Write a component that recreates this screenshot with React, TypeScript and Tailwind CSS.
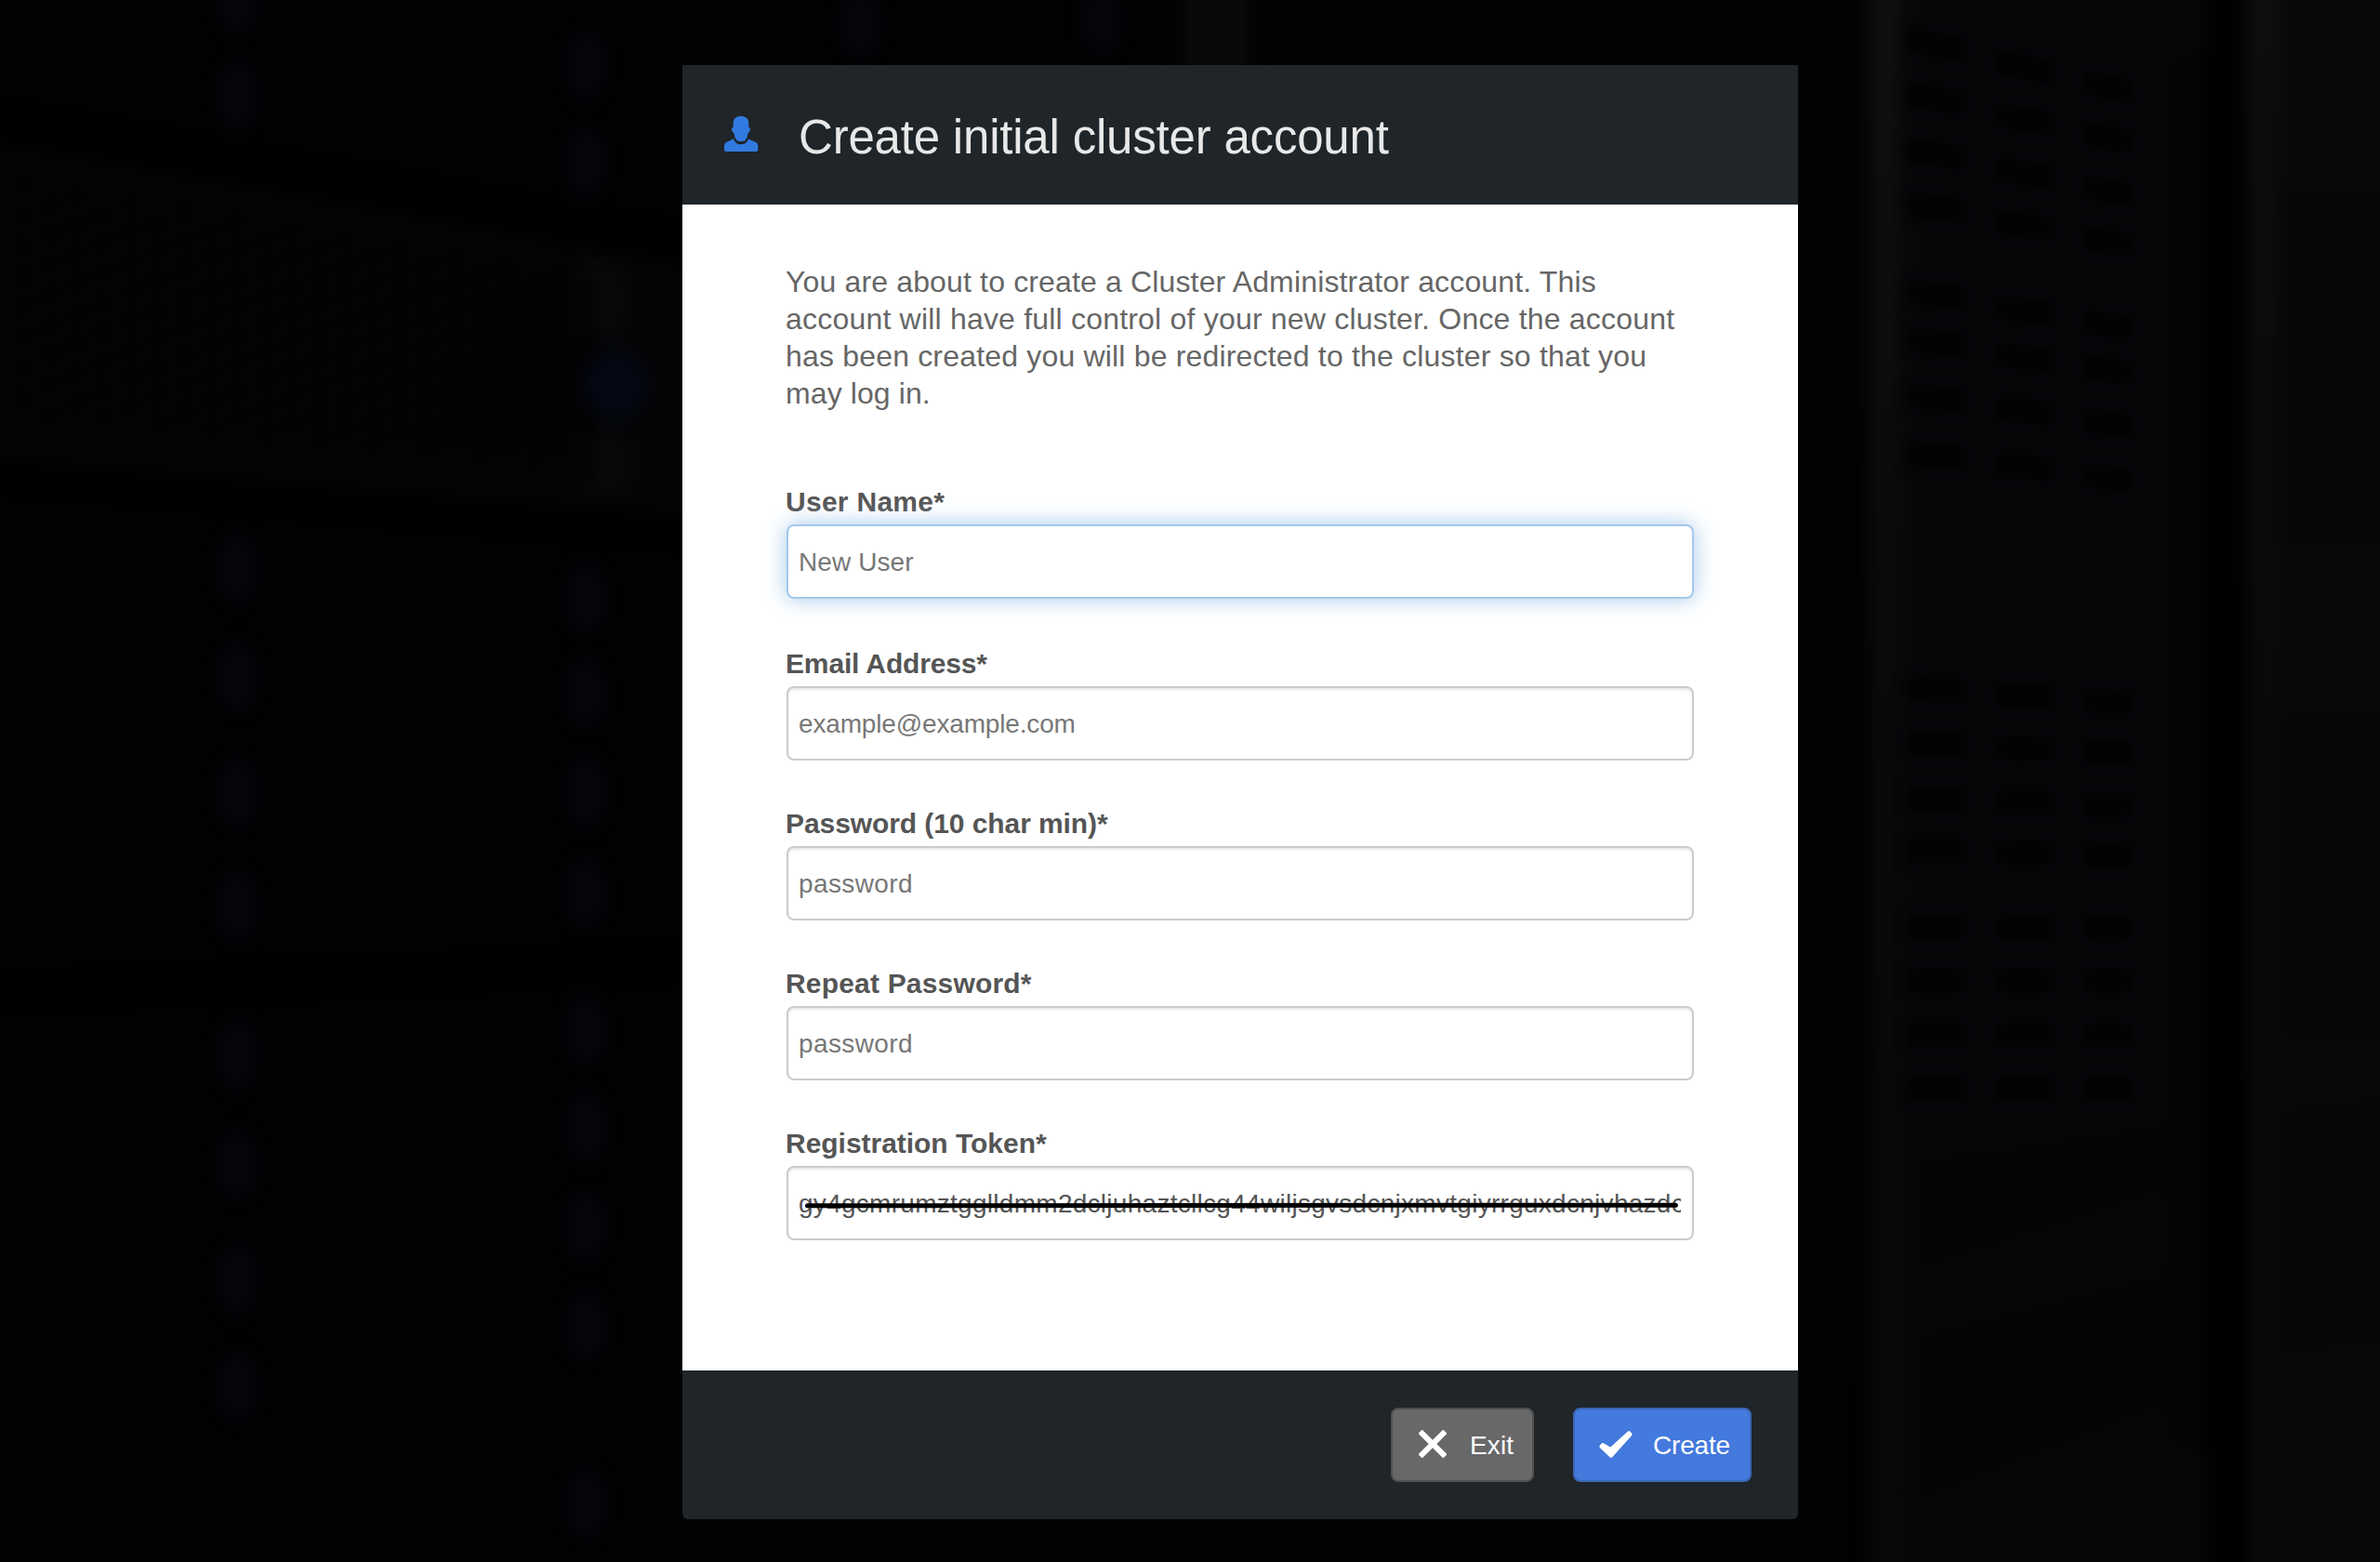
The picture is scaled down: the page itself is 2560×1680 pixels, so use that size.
import type { ReactNode } from 'react';

const leds: [number, number][] = [
  [255, 0], [255, 102], [255, 611], [255, 728], [255, 852], [255, 974],
  [255, 1135], [255, 1252], [255, 1376], [255, 1491],
  [630, 70], [630, 174], [630, 643], [630, 745], [630, 852],
  [630, 960], [630, 1108], [630, 1212], [630, 1319], [630, 1426], [630, 1617],
  [925, 26], [1185, 22],
];

const meshDots: [number, number][] = [];
for (let col = 0; col < 22; col++) {
  for (let row = 0; row < 8; row++) {
    const x = 24 + col * 29;
    const top = 195 + x * 0.165;
    const bottom = 458 + x * 0.09;
    meshDots.push([x, top + ((row + (col % 2) * 0.5) * (bottom - top)) / 8]);
  }
}

const slats: [number, number, number, number][] = [];
const slatColumns: [number, number, number][] = [
  [2050, 66, 0], [2146, 64, 24], [2240, 54, 46],
];
const slatRows = [
  30, 88, 148, 206, 300, 352, 412, 474, 728, 786, 846, 902, 984, 1042, 1100, 1158,
];
for (const [x, w, drop] of slatColumns) {
  for (const y of slatRows) {
    slats.push([x, y + drop * Math.max(0, 1 - y / 1000), w, Math.max(0, 3 - y / 300)]);
  }
}

function ServerRoom() {
  return (
    <svg className="absolute inset-0 h-full w-full" viewBox="0 0 2560 1680" aria-hidden="true">
      <defs>
        <filter id="soft" x="-10%" y="-10%" width="120%" height="120%" colorInterpolationFilters="sRGB">
          <feGaussianBlur stdDeviation="10" />
        </filter>
        <filter id="fine" x="-10%" y="-10%" width="120%" height="120%" colorInterpolationFilters="sRGB">
          <feGaussianBlur stdDeviation="7" />
        </filter>
        <linearGradient id="post" x1="0" y1="0" x2="0" y2="1">
          <stop offset="0" stopColor="#0f1011" />
          <stop offset="0.5" stopColor="#08090a" />
          <stop offset="1" stopColor="#070808" />
        </linearGradient>
      </defs>
      <rect width="2560" height="1680" fill="#010202" />
      <g filter="url(#soft)">
        <polygon points="-40,150 740,288 740,552 -40,488" fill="#040505" />
        <polyline points="-20,130 740,266" fill="none" stroke="#000000" strokeWidth="26" />
        <polyline points="-20,504 740,568" fill="none" stroke="#000000" strokeWidth="22" />
        <polyline points="-20,1069 740,1035" fill="none" stroke="#000000" strokeWidth="14" />
        {leds.map(([x, y]) => (
          <ellipse key={`${x}-${y}`} cx={x} cy={y} rx="19" ry="36" fill="#07060e" />
        ))}
        <ellipse cx="645" cy="325" rx="24" ry="44" fill="#08090a" />
        <ellipse cx="648" cy="495" rx="24" ry="38" fill="#08090a" />
        <rect x="1270" y="-20" width="76" height="110" fill="#08090a" />
      </g>
      <g filter="url(#fine)">
        {meshDots.map(([x, y]) => (
          <ellipse key={`${x}-${y}`} cx={x} cy={y} rx="10" ry="10" fill="#010101" />
        ))}
      </g>
      <g filter="url(#soft)">
        <ellipse cx="662" cy="414" rx="34" ry="38" fill="#050714" />
        <rect x="2010" y="-40" width="360" height="1760" fill="#060709" />
        <rect x="2330" y="60" width="50" height="1500" fill="#030404" />
        <rect x="2010" y="-40" width="34" height="1760" fill="url(#post)" />
        <rect x="2420" y="-40" width="200" height="1760" fill="#08090b" />
        <rect x="2418" y="-40" width="26" height="1760" fill="url(#post)" />
        <rect x="2370" y="-40" width="44" height="1760" fill="#000000" />
        <rect x="2450" y="200" width="160" height="390" fill="#050607" />
        <rect x="2450" y="760" width="160" height="360" fill="#050607" />
        <polygon points="2450,1190 2610,1170 2610,1440 2450,1460" fill="#050607" />
        <polygon points="2050,1240 2330,1200 2330,1290 2050,1380" fill="#040505" />
        <polygon points="2050,1430 2330,1360 2330,1520 2050,1630" fill="#040505" />
      </g>
      <g filter="url(#fine)">
        {slats.map(([x, y, w, tilt]) => (
          <polygon
            key={`${x}-${y}`}
            points={`${x},${y} ${x + w},${y + tilt * 4} ${x + w},${y + tilt * 4 + 26} ${x},${y + 26}`}
            fill="#020203"
          />
        ))}
      </g>
    </svg>
  );
}

function UserIcon() {
  return (
    <svg className="-mt-[2px] h-[38px] w-[37px] shrink-0" viewBox="-3 30 111 114" fill="#317ae0" aria-hidden="true">
      <path d="M51 30C35 30 26 38 26 54V66C21 67 20 71 22 76C24 82 27 84 29 86C30 94 32 101 36 106C39 111 45 111 51 111C57 111 63 111 66 106C70 101 72 94 73 86C75 84 78 82 80 76C82 71 81 67 76 66V54C76 38 67 30 51 30Z" />
      <path d="M25 103C32 111 33 121 51 121C69 121 70 111 77 103C85 112 106 111 106 125V139Q106 144 101 144H2Q-3 144 -3 139V125C-3 111 17 112 25 103Z" />
    </svg>
  );
}

function CrossIcon() {
  return (
    <svg className="h-[30px] w-[30px] shrink-0" viewBox="-45 -45 90 90" fill="#ffffff" aria-hidden="true">
      <rect x="-57" y="-9" width="114" height="18" rx="4" transform="rotate(45)" />
      <rect x="-57" y="-9" width="114" height="18" rx="4" transform="rotate(-45)" />
    </svg>
  );
}

function CheckIcon() {
  return (
    <svg className="h-[29px] w-[36px] shrink-0" viewBox="0 0 107 88" fill="#ffffff" aria-hidden="true">
      <path d="M2 55Q-2 50 2 46L7 41Q10 38 15 41L36 53L92 2Q97 -2 101 3L105 7Q109 12 104 17L42 86Q38 90 34 86Z" />
    </svg>
  );
}

function Field({
  label,
  labelClass,
  inputClass = 'border-[#cccccc] shadow-[inset_0_2px_3px_rgba(0,0,0,0.1)]',
  children,
}: {
  label: string;
  labelClass: string;
  inputClass?: string;
  children: ReactNode;
}) {
  return (
    <div className="flex flex-col">
      <label className={`-ml-px h-[40px] text-[30px] leading-[31px] font-bold whitespace-nowrap text-[#555555] ${labelClass}`}>
        {label}
      </label>
      <div
        className={`relative flex h-[80px] items-center rounded-[8px] border-2 bg-white pt-[2px] pr-[12px] pl-[11px] text-[28px] leading-[40px] ${inputClass}`}
      >
        {children}
      </div>
    </div>
  );
}

export default function App() {
  return (
    <div className="relative h-[1680px] w-[2560px] overflow-hidden bg-black font-['Liberation_Sans',Arial,sans-serif]">
      <ServerRoom />
      <div className="relative mt-[70px] ml-[734px] flex h-[1564px] w-[1200px] flex-col">
        <header className="flex h-[150px] shrink-0 items-center bg-[#1f2528] pl-[45px]">
          <UserIcon />
          <h1 className="mt-[5px] ml-[43px] text-[51px] leading-[60px] tracking-[-0.2px] whitespace-nowrap text-[#e8e8e8]">
            Create initial cluster account
          </h1>
        </header>

        <main className="flex grow flex-col bg-white px-[112px] pt-[63px]">
          <p className="-ml-px flex flex-col text-[32px] leading-[40px] whitespace-nowrap text-[#666666]">
            <span className="tracking-[0.15px]">You are about to create a Cluster Administrator account. This</span>
            <span className="tracking-[0.2px]">account will have full control of your new cluster. Once the account</span>
            <span className="tracking-[0.18px]">has been created you will be redirected to the cluster so that you</span>
            <span className="tracking-[0.1px]">may log in.</span>
          </p>

          <form className="mt-[81px] flex flex-col gap-[52px]">
            <div className="mb-[2px]">
              <Field
                label="User Name*"
                labelClass="tracking-[0.28px]"
                inputClass="border-[#a4c8ec] shadow-[0_0_24px_#a5c8ea]"
              >
                <span className="tracking-[0.1px] text-[#777777]">New User</span>
              </Field>
            </div>
            <Field label="Email Address*" labelClass="tracking-[-0.15px]">
              <span className="tracking-[-0.16px] text-[#777777]">example@example.com</span>
            </Field>
            <Field label="Password (10 char min)*" labelClass="tracking-[-0.08px]">
              <span className="tracking-[0.4px] text-[#777777]">password</span>
            </Field>
            <Field label="Repeat Password*" labelClass="tracking-[0.18px]">
              <span className="tracking-[0.4px] text-[#777777]">password</span>
            </Field>
            <Field label="Registration Token*" labelClass="tracking-[-0.03px]">
              <span className="w-full overflow-hidden tracking-[0.28px] whitespace-nowrap text-[#555555]">
                gy4gcmrumztgglldmm2dcljuhaztcllcg44wiljsgvsdcnjxmvtgiyrrguxdcnjvhazdc
              </span>
              <span className="absolute top-[38px] left-[18px] h-[5px] w-[939px] rotate-[-0.04deg] rounded-full bg-black" />
            </Field>
          </form>
        </main>

        <footer className="flex h-[160px] shrink-0 items-center justify-end gap-[42px] rounded-b-[6px] bg-[#1f2528] pr-[50px] text-[28px] text-white">
          <button className="flex h-[80px] w-[154px] items-center rounded-[8px] border-2 border-[#505050] bg-[#686868] pl-[28px]">
            <span className="-mt-[2px]"><CrossIcon /></span>
            <span className="mt-[2px] ml-[25px] tracking-[0.1px]">Exit</span>
          </button>
          <button className="flex h-[80px] w-[192px] items-center rounded-[8px] border-2 border-[#3b67b5] bg-[#4479dd] pl-[26px]">
            <span className="-mt-[1px]"><CheckIcon /></span>
            <span className="mt-[2px] ml-[22px] tracking-[-0.2px]">Create</span>
          </button>
        </footer>
      </div>
    </div>
  );
}
